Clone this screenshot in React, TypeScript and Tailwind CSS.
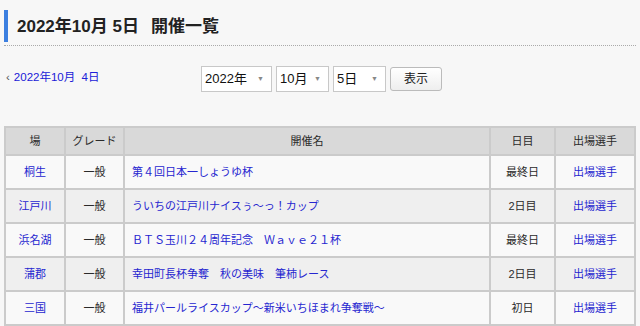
const rows = [
  { place: "桐生", grade: "一般", name: "第４回日本一しょうゆ杯", day: "最終日" },
  { place: "江戸川", grade: "一般", name: "ういちの江戸川ナイスぅ〜っ！カップ", day: "2日目" },
  { place: "浜名湖", grade: "一般", name: "ＢＴＳ玉川２４周年記念　Ｗａｖｅ２１杯", day: "最終日" },
  { place: "蒲郡", grade: "一般", name: "幸田町長杯争奪　秋の美味　筆柿レース", day: "2日目" },
  { place: "三国", grade: "一般", name: "福井パールライスカップ〜新米いちほまれ争奪戦〜", day: "初日" },
]

function Select({ label, width }: { label: string; width: string }) {
  return (
    <div
      className={`${width} h-[26px] flex items-center justify-between border border-[#c8c8c8] bg-white pl-[3px] pr-[7px] text-[13px] text-[#111]`}
    >
      <span>{label}</span>
      <span className="text-[7px] text-[#888]">▼</span>
    </div>
  )
}

export default function App() {
  return (
    <div
      className="w-[640px] h-[326px] overflow-hidden bg-[#f7f7f7] px-[4px] pt-[10px]"
      style={{ fontFamily: '"Liberation Sans", "Noto Sans CJK JP", sans-serif' }}
    >
      <div className="border-b border-dotted border-[#aaa] pb-[3px]">
        <div className="flex items-center h-[32px] border-l-[4px] border-[#3c7fe0] pl-[9px]">
          <h1 className="text-[17px] font-bold text-[#222] leading-none">
            2022年10月 5日<span className="ml-[12px]">開催一覧</span>
          </h1>
        </div>
      </div>

      <div className="flex items-start mt-[20px] h-[26px]">
        <a className="w-[197px] pl-[2px] pt-[3px] text-[11.5px] text-[#2020d8] flex items-center gap-[4px]">
          <span className="text-[#555]">‹</span>
          <span>2022年10月&nbsp;&nbsp;4日</span>
        </a>
        <div className="flex gap-[4px] items-center">
          <Select label="2022年" width="w-[71px]" />
          <Select label="10月" width="w-[53px]" />
          <Select label="5日" width="w-[53px]" />
          <button className="w-[52px] h-[24px] rounded-[3px] border border-[#bbb] bg-gradient-to-b from-white to-[#eee] text-[12px] text-[#222]">
            表示
          </button>
        </div>
      </div>

      <table className="mt-[34px] w-[632px] border-collapse text-[11px] text-[#2a2a2a]">
        <thead>
          <tr className="bg-[#d9d9d9] h-[28px]">
            <th className="w-[60px] border-2 border-[#cbcbcb] font-normal">場</th>
            <th className="w-[59px] border-2 border-[#cbcbcb] font-normal">グレード</th>
            <th className="border-2 border-[#cbcbcb] font-normal">開催名</th>
            <th className="w-[65px] border-2 border-[#cbcbcb] font-normal">日目</th>
            <th className="w-[80px] border-2 border-[#cbcbcb] font-normal">出場選手</th>
          </tr>
        </thead>
        <tbody>
          {rows.map((r, i) => (
            <tr key={r.place} className={`h-[34px] ${i % 2 === 0 ? "bg-[#f9f9f9]" : "bg-[#efefef]"}`}>
              <td className="border-2 border-[#cbcbcb] text-center text-[#2626d0]">{r.place}</td>
              <td className="border-2 border-[#cbcbcb] text-center">{r.grade}</td>
              <td className="border-2 border-[#cbcbcb] pl-[7px] text-[#2626d0]">{r.name}</td>
              <td className="border-2 border-[#cbcbcb] text-center">{r.day}</td>
              <td className="border-2 border-[#cbcbcb] text-center text-[#2626d0]">出場選手</td>
            </tr>
          ))}
        </tbody>
      </table>
    </div>
  )
}
